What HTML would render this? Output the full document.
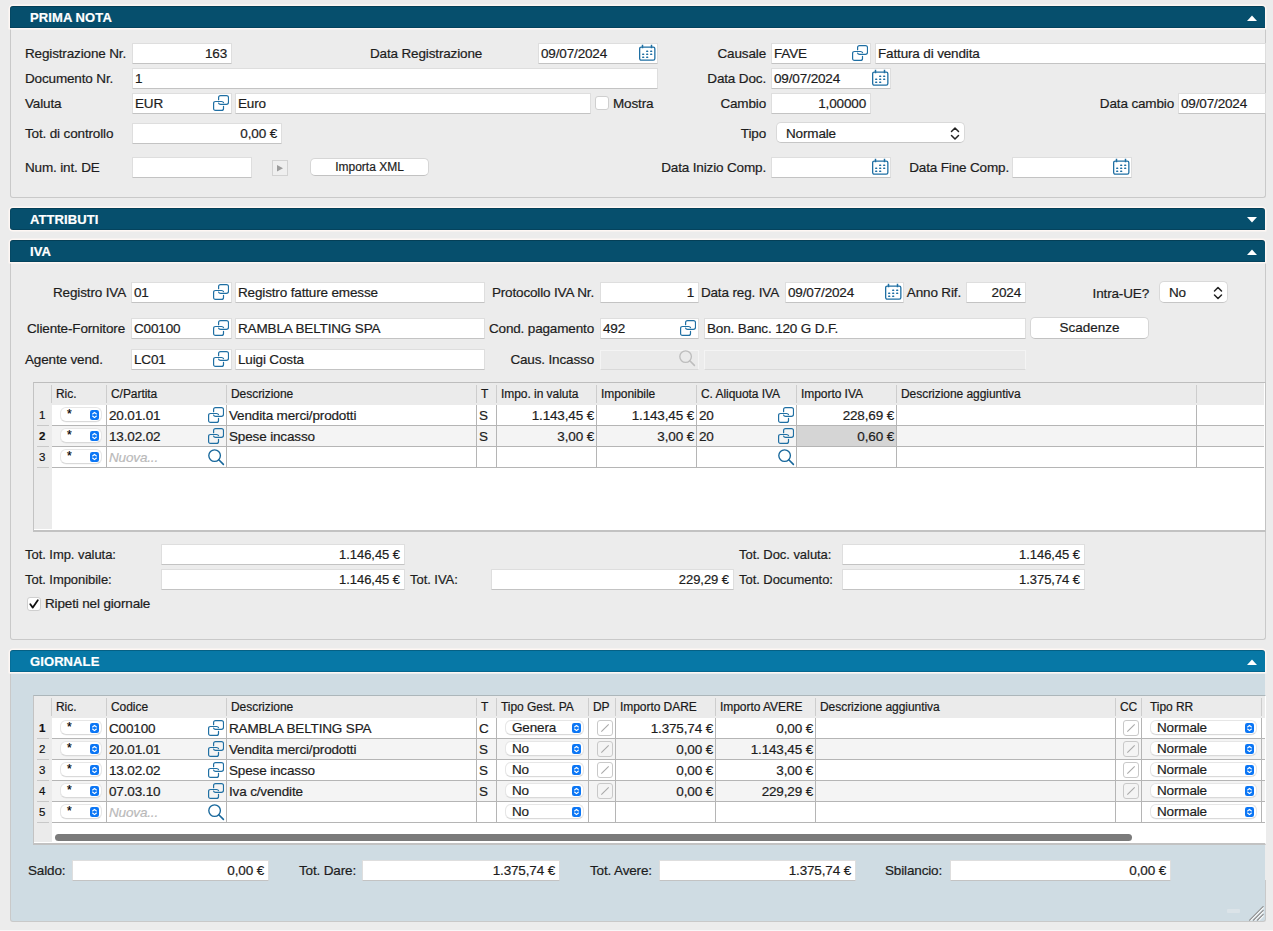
<!DOCTYPE html><html><head><meta charset="utf-8"><title>Prima Nota</title><style>

html,body{margin:0;padding:0}
body{width:1273px;height:931px;position:relative;overflow:hidden;background:#ececec;font-family:"Liberation Sans",sans-serif;}
.a{position:absolute;box-sizing:content-box}
.t{position:absolute;white-space:nowrap;font-family:"Liberation Sans",sans-serif;-webkit-text-stroke:0.2px currentColor}
.tf{border:1px solid #dedede;border-bottom-color:#c3c3c3;border-radius:1px}
.pop{background:#fff;border:1px solid #d9d9d9;border-bottom-color:#c6c6c6;border-radius:5px}
.btn{background:#fff;border:1px solid #d6d6d6;border-bottom-color:#c2c2c2;border-radius:5px;text-align:center;color:#1d1d1d;font-family:"Liberation Sans",sans-serif;white-space:nowrap}
.spop{background:#fff;border:1px solid #e6e6e6;border-bottom-color:#d9d9d9;border-radius:6px;box-shadow:0 0.5px 0.5px rgba(0,0,0,0.06)}
.cb{width:12px;height:12px;background:#fff;border:1px solid #cfcfcf;border-radius:3px}
.hdr{box-shadow:0 0 0 1.5px rgba(255,248,244,0.95), inset 0 1px 0 rgba(0,0,0,0.2), inset 0 -1px 0 rgba(0,0,0,0.14), inset 1px 0 0 rgba(0,0,0,0.08)}
.pnl{border:1px solid #c9c9c9;border-top:none;border-radius:0 0 3px 3px}

</style></head><body>
<div class="a pnl" style="left:10px;top:28px;width:1254px;height:169px;background:#ececec"></div>
<div class="a hdr" style="left:10px;top:6px;width:1255px;height:22px;background:#064f6d;border-radius:3px 3px 0 0"></div>
<div class="t" style="top:7px;height:22px;line-height:22px;font-size:13.01px;color:#fff;letter-spacing:0px;font-weight:bold;left:30px;letter-spacing:0.1px;">PRIMA NOTA</div>
<svg class="a" style="left:1247px;top:14.5px" width="10" height="7" viewBox="0 0 10 7"><polygon points="0,6 5,0.5 10,6" fill="#fff"/></svg>
<div class="t" style="top:44px;height:19px;line-height:19px;font-size:13.5px;color:#1d1d1d;letter-spacing:-0.15px;left:25px;">Registrazione Nr.</div>
<div class="a tf" style="left:132px;top:43px;width:98px;height:19px;background:#fff;border-color:#dedede;border-bottom-color:#c3c3c3"></div>
<div class="t" style="top:44px;height:20px;line-height:20px;font-size:13.5px;color:#1d1d1d;letter-spacing:-0.15px;right:1046px;text-align:right;">163</div>
<div class="t" style="top:44px;height:19px;line-height:19px;font-size:13.5px;color:#1d1d1d;letter-spacing:-0.15px;left:370px;">Data Registrazione</div>
<div class="a tf" style="left:538px;top:43px;width:118px;height:19px;background:#fff;border-color:#dedede;border-bottom-color:#c3c3c3"></div>
<div class="t" style="top:44px;height:20px;line-height:20px;font-size:13.5px;color:#1d1d1d;letter-spacing:-0.15px;left:541px;">09/07/2024</div>
<div class="a" style="left:639px;top:44px;line-height:0"><svg width="17" height="17" viewBox="0 0 17 17" fill="none" stroke="#1f6fa3" stroke-width="1.3"><rect x="0.65" y="3.1" width="15.2" height="13.1" rx="1.6"/><path d="M3.5,0.8 V4.3 M12.5,0.8 V4.3" stroke-width="1.5"/><g stroke="none" fill="#1f6fa3"><rect x="7.1" y="6.6" width="2.2" height="1.4" rx=".6"/><rect x="11.1" y="6.6" width="2.2" height="1.4" rx=".6"/><rect x="3.1" y="9.6" width="2.2" height="1.4" rx=".6"/><rect x="7.1" y="9.6" width="2.2" height="1.4" rx=".6"/><rect x="11.1" y="9.6" width="2.2" height="1.4" rx=".6"/><rect x="3.1" y="12.6" width="2.2" height="1.4" rx=".6"/><rect x="7.1" y="12.6" width="2.2" height="1.4" rx=".6"/></g></svg></div>
<div class="t" style="top:44px;height:19px;line-height:19px;font-size:13.5px;color:#1d1d1d;letter-spacing:-0.15px;right:507px;text-align:right;">Causale</div>
<div class="a tf" style="left:771px;top:43px;width:98px;height:19px;background:#fff;border-color:#dedede;border-bottom-color:#c3c3c3"></div>
<div class="t" style="top:44px;height:20px;line-height:20px;font-size:13.5px;color:#1d1d1d;letter-spacing:-0.15px;left:774px;">FAVE</div>
<div class="a" style="left:852px;top:45px;line-height:0"><svg width="16" height="16" viewBox="0 0 16 16" fill="none" stroke="#1f6fa3" stroke-width="1.2" stroke-linecap="round"><path d="M5.6,4.7 V2.6 Q5.6,0.6 7.6,0.6 H13.5 Q15.5,0.6 15.5,2.6 V7.3 Q15.5,9.3 13.5,9.3 H7.6 Q5.9,9.3 5.6,8.2"/><path d="M10.5,11.3 V13.4 Q10.5,15.4 8.5,15.4 H2.6 Q0.6,15.4 0.6,13.4 V8.5 Q0.6,6.5 2.6,6.5 H8.5 Q10.2,6.5 10.5,7.6"/></svg></div>
<div class="a tf" style="left:875px;top:43px;width:389px;height:19px;background:#fff;border-color:#dedede;border-bottom-color:#c3c3c3"></div>
<div class="t" style="top:44px;height:20px;line-height:20px;font-size:13.5px;color:#1d1d1d;letter-spacing:-0.15px;left:878px;">Fattura di vendita</div>
<div class="t" style="top:69px;height:19px;line-height:19px;font-size:13.5px;color:#1d1d1d;letter-spacing:-0.15px;left:25px;">Documento Nr.</div>
<div class="a tf" style="left:132px;top:68px;width:524px;height:19px;background:#fff;border-color:#dedede;border-bottom-color:#c3c3c3"></div>
<div class="t" style="top:69px;height:20px;line-height:20px;font-size:13.5px;color:#1d1d1d;letter-spacing:-0.15px;left:135px;">1</div>
<div class="t" style="top:69px;height:19px;line-height:19px;font-size:13.5px;color:#1d1d1d;letter-spacing:-0.15px;right:507px;text-align:right;">Data Doc.</div>
<div class="a tf" style="left:771px;top:68px;width:118px;height:19px;background:#fff;border-color:#dedede;border-bottom-color:#c3c3c3"></div>
<div class="t" style="top:69px;height:20px;line-height:20px;font-size:13.5px;color:#1d1d1d;letter-spacing:-0.15px;left:774px;">09/07/2024</div>
<div class="a" style="left:872px;top:69px;line-height:0"><svg width="17" height="17" viewBox="0 0 17 17" fill="none" stroke="#1f6fa3" stroke-width="1.3"><rect x="0.65" y="3.1" width="15.2" height="13.1" rx="1.6"/><path d="M3.5,0.8 V4.3 M12.5,0.8 V4.3" stroke-width="1.5"/><g stroke="none" fill="#1f6fa3"><rect x="7.1" y="6.6" width="2.2" height="1.4" rx=".6"/><rect x="11.1" y="6.6" width="2.2" height="1.4" rx=".6"/><rect x="3.1" y="9.6" width="2.2" height="1.4" rx=".6"/><rect x="7.1" y="9.6" width="2.2" height="1.4" rx=".6"/><rect x="11.1" y="9.6" width="2.2" height="1.4" rx=".6"/><rect x="3.1" y="12.6" width="2.2" height="1.4" rx=".6"/><rect x="7.1" y="12.6" width="2.2" height="1.4" rx=".6"/></g></svg></div>
<div class="t" style="top:94px;height:19px;line-height:19px;font-size:13.5px;color:#1d1d1d;letter-spacing:-0.15px;left:25px;">Valuta</div>
<div class="a tf" style="left:132px;top:93px;width:98px;height:19px;background:#fff;border-color:#dedede;border-bottom-color:#c3c3c3"></div>
<div class="t" style="top:94px;height:20px;line-height:20px;font-size:13.5px;color:#1d1d1d;letter-spacing:-0.15px;left:135px;">EUR</div>
<div class="a" style="left:213px;top:95px;line-height:0"><svg width="16" height="16" viewBox="0 0 16 16" fill="none" stroke="#1f6fa3" stroke-width="1.2" stroke-linecap="round"><path d="M5.6,4.7 V2.6 Q5.6,0.6 7.6,0.6 H13.5 Q15.5,0.6 15.5,2.6 V7.3 Q15.5,9.3 13.5,9.3 H7.6 Q5.9,9.3 5.6,8.2"/><path d="M10.5,11.3 V13.4 Q10.5,15.4 8.5,15.4 H2.6 Q0.6,15.4 0.6,13.4 V8.5 Q0.6,6.5 2.6,6.5 H8.5 Q10.2,6.5 10.5,7.6"/></svg></div>
<div class="a tf" style="left:235px;top:93px;width:354px;height:19px;background:#fff;border-color:#dedede;border-bottom-color:#c3c3c3"></div>
<div class="t" style="top:94px;height:20px;line-height:20px;font-size:13.5px;color:#1d1d1d;letter-spacing:-0.15px;left:238px;">Euro</div>
<div class="a cb" style="left:595px;top:96px"></div>
<div class="t" style="top:94px;height:19px;line-height:19px;font-size:13.5px;color:#1d1d1d;letter-spacing:-0.15px;left:613px;">Mostra</div>
<div class="t" style="top:94px;height:19px;line-height:19px;font-size:13.5px;color:#1d1d1d;letter-spacing:-0.15px;right:507px;text-align:right;">Cambio</div>
<div class="a tf" style="left:771px;top:93px;width:98px;height:19px;background:#fff;border-color:#dedede;border-bottom-color:#c3c3c3"></div>
<div class="t" style="top:94px;height:20px;line-height:20px;font-size:13.5px;color:#1d1d1d;letter-spacing:-0.15px;right:407px;text-align:right;">1,00000</div>
<div class="t" style="top:94px;height:19px;line-height:19px;font-size:13.5px;color:#1d1d1d;letter-spacing:-0.15px;right:99px;text-align:right;">Data cambio</div>
<div class="a tf" style="left:1178px;top:93px;width:86px;height:19px;background:#fff;border-color:#dedede;border-bottom-color:#c3c3c3"></div>
<div class="t" style="top:94px;height:20px;line-height:20px;font-size:13.5px;color:#1d1d1d;letter-spacing:-0.15px;left:1181px;">09/07/2024</div>
<div class="t" style="top:124px;height:19px;line-height:19px;font-size:13.5px;color:#1d1d1d;letter-spacing:-0.15px;left:25px;">Tot. di controllo</div>
<div class="a tf" style="left:132px;top:123px;width:148px;height:19px;background:#fff;border-color:#dedede;border-bottom-color:#c3c3c3"></div>
<div class="t" style="top:124px;height:20px;line-height:20px;font-size:13.5px;color:#1d1d1d;letter-spacing:-0.15px;right:996px;text-align:right;">0,00 €</div>
<div class="t" style="top:124px;height:20px;line-height:20px;font-size:13.5px;color:#1d1d1d;letter-spacing:-0.15px;right:507px;text-align:right;">Tipo</div>
<div class="a pop" style="left:776px;top:122px;width:187px;height:19px"></div>
<div class="t" style="top:123px;height:21px;line-height:21px;font-size:13.5px;color:#1d1d1d;letter-spacing:-0.15px;left:786px;">Normale</div>
<svg class="a" style="left:948px;top:123px" width="14" height="21" viewBox="0 0 14 21" fill="none" stroke="#222" stroke-width="1.5" stroke-linecap="round" stroke-linejoin="round"><path d="M3.5,8.5 L7,5.0 L10.5,8.5 M3.5,12.5 L7,16.0 L10.5,12.5"/></svg>
<div class="t" style="top:158px;height:19px;line-height:19px;font-size:13.5px;color:#1d1d1d;letter-spacing:-0.15px;left:25px;">Num. int. DE</div>
<div class="a tf" style="left:132px;top:157px;width:118px;height:19px;background:#fff;border-color:#dedede;border-bottom-color:#c3c3c3"></div>
<div class="a" style="left:272px;top:160px;width:14px;height:14px;background:#efefef;border:1px solid #d2d2d2"></div>
<svg class="a" style="left:277px;top:165px" width="7" height="7" viewBox="0 0 7 7"><polygon points="0,0 6,3.2 0,6.4" fill="#9c9c9c"/></svg>
<div class="a btn" style="left:310px;top:158px;width:117px;height:16px;line-height:16px;font-size:12px;-webkit-text-stroke:0.2px currentColor">Importa XML</div>
<div class="t" style="top:158px;height:19px;line-height:19px;font-size:13.5px;color:#1d1d1d;letter-spacing:-0.15px;right:507px;text-align:right;">Data Inizio Comp.</div>
<div class="a tf" style="left:771px;top:157px;width:118px;height:19px;background:#fff;border-color:#dedede;border-bottom-color:#c3c3c3"></div>
<div class="a" style="left:872px;top:158px;line-height:0"><svg width="17" height="17" viewBox="0 0 17 17" fill="none" stroke="#1f6fa3" stroke-width="1.3"><rect x="0.65" y="3.1" width="15.2" height="13.1" rx="1.6"/><path d="M3.5,0.8 V4.3 M12.5,0.8 V4.3" stroke-width="1.5"/><g stroke="none" fill="#1f6fa3"><rect x="7.1" y="6.6" width="2.2" height="1.4" rx=".6"/><rect x="11.1" y="6.6" width="2.2" height="1.4" rx=".6"/><rect x="3.1" y="9.6" width="2.2" height="1.4" rx=".6"/><rect x="7.1" y="9.6" width="2.2" height="1.4" rx=".6"/><rect x="11.1" y="9.6" width="2.2" height="1.4" rx=".6"/><rect x="3.1" y="12.6" width="2.2" height="1.4" rx=".6"/><rect x="7.1" y="12.6" width="2.2" height="1.4" rx=".6"/></g></svg></div>
<div class="t" style="top:158px;height:19px;line-height:19px;font-size:13.5px;color:#1d1d1d;letter-spacing:-0.15px;right:264px;text-align:right;">Data Fine Comp.</div>
<div class="a tf" style="left:1012px;top:157px;width:118px;height:19px;background:#fff;border-color:#dedede;border-bottom-color:#c3c3c3"></div>
<div class="a" style="left:1113px;top:158px;line-height:0"><svg width="17" height="17" viewBox="0 0 17 17" fill="none" stroke="#1f6fa3" stroke-width="1.3"><rect x="0.65" y="3.1" width="15.2" height="13.1" rx="1.6"/><path d="M3.5,0.8 V4.3 M12.5,0.8 V4.3" stroke-width="1.5"/><g stroke="none" fill="#1f6fa3"><rect x="7.1" y="6.6" width="2.2" height="1.4" rx=".6"/><rect x="11.1" y="6.6" width="2.2" height="1.4" rx=".6"/><rect x="3.1" y="9.6" width="2.2" height="1.4" rx=".6"/><rect x="7.1" y="9.6" width="2.2" height="1.4" rx=".6"/><rect x="11.1" y="9.6" width="2.2" height="1.4" rx=".6"/><rect x="3.1" y="12.6" width="2.2" height="1.4" rx=".6"/><rect x="7.1" y="12.6" width="2.2" height="1.4" rx=".6"/></g></svg></div>
<div class="a hdr" style="left:10px;top:208px;width:1255px;height:22px;background:#064f6d;border-radius:3px 3px 0 3px"></div>
<div class="t" style="top:209px;height:22px;line-height:22px;font-size:13.01px;color:#fff;letter-spacing:0px;font-weight:bold;left:30px;letter-spacing:0.1px;">ATTRIBUTI</div>
<svg class="a" style="left:1247px;top:216.5px" width="10" height="7" viewBox="0 0 10 7"><polygon points="0,0 10,0 5,5.5" fill="#fff"/></svg>
<div class="a pnl" style="left:10px;top:262px;width:1254px;height:377px;background:#ececec"></div>
<div class="a hdr" style="left:10px;top:240px;width:1255px;height:22px;background:#064f6d;border-radius:3px 3px 0 0"></div>
<div class="t" style="top:241px;height:22px;line-height:22px;font-size:13.01px;color:#fff;letter-spacing:0px;font-weight:bold;left:30px;letter-spacing:0.1px;">IVA</div>
<svg class="a" style="left:1247px;top:248.5px" width="10" height="7" viewBox="0 0 10 7"><polygon points="0,6 5,0.5 10,6" fill="#fff"/></svg>
<div class="t" style="top:283px;height:19px;line-height:19px;font-size:13.5px;color:#1d1d1d;letter-spacing:-0.15px;right:1147px;text-align:right;">Registro IVA</div>
<div class="a tf" style="left:131px;top:282px;width:99px;height:19px;background:#fff;border-color:#dedede;border-bottom-color:#c3c3c3"></div>
<div class="t" style="top:283px;height:20px;line-height:20px;font-size:13.5px;color:#1d1d1d;letter-spacing:-0.15px;left:134px;">01</div>
<div class="a" style="left:213px;top:284px;line-height:0"><svg width="16" height="16" viewBox="0 0 16 16" fill="none" stroke="#1f6fa3" stroke-width="1.2" stroke-linecap="round"><path d="M5.6,4.7 V2.6 Q5.6,0.6 7.6,0.6 H13.5 Q15.5,0.6 15.5,2.6 V7.3 Q15.5,9.3 13.5,9.3 H7.6 Q5.9,9.3 5.6,8.2"/><path d="M10.5,11.3 V13.4 Q10.5,15.4 8.5,15.4 H2.6 Q0.6,15.4 0.6,13.4 V8.5 Q0.6,6.5 2.6,6.5 H8.5 Q10.2,6.5 10.5,7.6"/></svg></div>
<div class="a tf" style="left:235px;top:282px;width:248px;height:19px;background:#fff;border-color:#dedede;border-bottom-color:#c3c3c3"></div>
<div class="t" style="top:283px;height:20px;line-height:20px;font-size:13.5px;color:#1d1d1d;letter-spacing:-0.15px;left:238px;">Registro fatture emesse</div>
<div class="t" style="top:283px;height:19px;line-height:19px;font-size:13.5px;color:#1d1d1d;letter-spacing:-0.15px;right:679px;text-align:right;">Protocollo IVA Nr.</div>
<div class="a tf" style="left:600px;top:282px;width:97px;height:19px;background:#fff;border-color:#dedede;border-bottom-color:#c3c3c3"></div>
<div class="t" style="top:283px;height:20px;line-height:20px;font-size:13.5px;color:#1d1d1d;letter-spacing:-0.15px;right:579px;text-align:right;">1</div>
<div class="t" style="top:283px;height:19px;line-height:19px;font-size:13.5px;color:#1d1d1d;letter-spacing:-0.15px;right:494px;text-align:right;">Data reg. IVA</div>
<div class="a tf" style="left:785px;top:282px;width:117px;height:19px;background:#fff;border-color:#dedede;border-bottom-color:#c3c3c3"></div>
<div class="t" style="top:283px;height:20px;line-height:20px;font-size:13.5px;color:#1d1d1d;letter-spacing:-0.15px;left:788px;">09/07/2024</div>
<div class="a" style="left:885px;top:283px;line-height:0"><svg width="17" height="17" viewBox="0 0 17 17" fill="none" stroke="#1f6fa3" stroke-width="1.3"><rect x="0.65" y="3.1" width="15.2" height="13.1" rx="1.6"/><path d="M3.5,0.8 V4.3 M12.5,0.8 V4.3" stroke-width="1.5"/><g stroke="none" fill="#1f6fa3"><rect x="7.1" y="6.6" width="2.2" height="1.4" rx=".6"/><rect x="11.1" y="6.6" width="2.2" height="1.4" rx=".6"/><rect x="3.1" y="9.6" width="2.2" height="1.4" rx=".6"/><rect x="7.1" y="9.6" width="2.2" height="1.4" rx=".6"/><rect x="11.1" y="9.6" width="2.2" height="1.4" rx=".6"/><rect x="3.1" y="12.6" width="2.2" height="1.4" rx=".6"/><rect x="7.1" y="12.6" width="2.2" height="1.4" rx=".6"/></g></svg></div>
<div class="t" style="top:283px;height:19px;line-height:19px;font-size:13.5px;color:#1d1d1d;letter-spacing:-0.15px;right:312px;text-align:right;">Anno Rif.</div>
<div class="a tf" style="left:966px;top:282px;width:58px;height:19px;background:#fff;border-color:#dedede;border-bottom-color:#c3c3c3"></div>
<div class="t" style="top:283px;height:20px;line-height:20px;font-size:13.5px;color:#1d1d1d;letter-spacing:-0.15px;right:252px;text-align:right;">2024</div>
<div class="t" style="top:283px;height:21px;line-height:21px;font-size:13.5px;color:#1d1d1d;letter-spacing:-0.15px;right:124px;text-align:right;">Intra-UE?</div>
<div class="a pop" style="left:1159px;top:281px;width:67px;height:20px"></div>
<div class="t" style="top:282px;height:22px;line-height:22px;font-size:13.5px;color:#1d1d1d;letter-spacing:-0.15px;left:1169px;">No</div>
<svg class="a" style="left:1211px;top:282px" width="14" height="22" viewBox="0 0 14 22" fill="none" stroke="#222" stroke-width="1.5" stroke-linecap="round" stroke-linejoin="round"><path d="M3.5,9.0 L7,5.5 L10.5,9.0 M3.5,13.0 L7,16.5 L10.5,13.0"/></svg>
<div class="t" style="top:319px;height:19px;line-height:19px;font-size:13.5px;color:#1d1d1d;letter-spacing:-0.15px;right:1148px;text-align:right;">Cliente-Fornitore</div>
<div class="a tf" style="left:131px;top:318px;width:99px;height:19px;background:#fff;border-color:#dedede;border-bottom-color:#c3c3c3"></div>
<div class="t" style="top:319px;height:20px;line-height:20px;font-size:13.5px;color:#1d1d1d;letter-spacing:-0.15px;left:134px;">C00100</div>
<div class="a" style="left:213px;top:320px;line-height:0"><svg width="16" height="16" viewBox="0 0 16 16" fill="none" stroke="#1f6fa3" stroke-width="1.2" stroke-linecap="round"><path d="M5.6,4.7 V2.6 Q5.6,0.6 7.6,0.6 H13.5 Q15.5,0.6 15.5,2.6 V7.3 Q15.5,9.3 13.5,9.3 H7.6 Q5.9,9.3 5.6,8.2"/><path d="M10.5,11.3 V13.4 Q10.5,15.4 8.5,15.4 H2.6 Q0.6,15.4 0.6,13.4 V8.5 Q0.6,6.5 2.6,6.5 H8.5 Q10.2,6.5 10.5,7.6"/></svg></div>
<div class="a tf" style="left:235px;top:318px;width:248px;height:19px;background:#fff;border-color:#dedede;border-bottom-color:#c3c3c3"></div>
<div class="t" style="top:319px;height:20px;line-height:20px;font-size:13.5px;color:#1d1d1d;letter-spacing:-0.15px;left:238px;">RAMBLA BELTING SPA</div>
<div class="t" style="top:319px;height:19px;line-height:19px;font-size:13.5px;color:#1d1d1d;letter-spacing:-0.15px;right:679px;text-align:right;">Cond. pagamento</div>
<div class="a tf" style="left:600px;top:318px;width:97px;height:19px;background:#fff;border-color:#dedede;border-bottom-color:#c3c3c3"></div>
<div class="t" style="top:319px;height:20px;line-height:20px;font-size:13.5px;color:#1d1d1d;letter-spacing:-0.15px;left:603px;">492</div>
<div class="a" style="left:680px;top:320px;line-height:0"><svg width="16" height="16" viewBox="0 0 16 16" fill="none" stroke="#1f6fa3" stroke-width="1.2" stroke-linecap="round"><path d="M5.6,4.7 V2.6 Q5.6,0.6 7.6,0.6 H13.5 Q15.5,0.6 15.5,2.6 V7.3 Q15.5,9.3 13.5,9.3 H7.6 Q5.9,9.3 5.6,8.2"/><path d="M10.5,11.3 V13.4 Q10.5,15.4 8.5,15.4 H2.6 Q0.6,15.4 0.6,13.4 V8.5 Q0.6,6.5 2.6,6.5 H8.5 Q10.2,6.5 10.5,7.6"/></svg></div>
<div class="a tf" style="left:704px;top:318px;width:320px;height:19px;background:#fff;border-color:#dedede;border-bottom-color:#c3c3c3"></div>
<div class="t" style="top:319px;height:20px;line-height:20px;font-size:13.5px;color:#1d1d1d;letter-spacing:-0.15px;left:707px;">Bon. Banc. 120 G D.F.</div>
<div class="a btn" style="left:1030px;top:317px;width:117px;height:20px;line-height:20px;font-size:13.5px;-webkit-text-stroke:0.2px currentColor">Scadenze</div>
<div class="t" style="top:350px;height:19px;line-height:19px;font-size:13.5px;color:#1d1d1d;letter-spacing:-0.15px;left:25px;">Agente vend.</div>
<div class="a tf" style="left:131px;top:349px;width:99px;height:19px;background:#fff;border-color:#dedede;border-bottom-color:#c3c3c3"></div>
<div class="t" style="top:350px;height:20px;line-height:20px;font-size:13.5px;color:#1d1d1d;letter-spacing:-0.15px;left:134px;">LC01</div>
<div class="a" style="left:213px;top:351px;line-height:0"><svg width="16" height="16" viewBox="0 0 16 16" fill="none" stroke="#1f6fa3" stroke-width="1.2" stroke-linecap="round"><path d="M5.6,4.7 V2.6 Q5.6,0.6 7.6,0.6 H13.5 Q15.5,0.6 15.5,2.6 V7.3 Q15.5,9.3 13.5,9.3 H7.6 Q5.9,9.3 5.6,8.2"/><path d="M10.5,11.3 V13.4 Q10.5,15.4 8.5,15.4 H2.6 Q0.6,15.4 0.6,13.4 V8.5 Q0.6,6.5 2.6,6.5 H8.5 Q10.2,6.5 10.5,7.6"/></svg></div>
<div class="a tf" style="left:235px;top:349px;width:248px;height:19px;background:#fff;border-color:#dedede;border-bottom-color:#c3c3c3"></div>
<div class="t" style="top:350px;height:20px;line-height:20px;font-size:13.5px;color:#1d1d1d;letter-spacing:-0.15px;left:238px;">Luigi Costa</div>
<div class="t" style="top:350px;height:19px;line-height:19px;font-size:13.5px;color:#1d1d1d;letter-spacing:-0.15px;right:679px;text-align:right;">Caus. Incasso</div>
<div class="a tf" style="left:600px;top:350px;width:97px;height:18px;background:#eaeaea;border-color:#f4f4f4;border-bottom-color:#d9d9d9"></div>
<div class="a" style="left:679px;top:350px;line-height:0"><svg width="17" height="17" viewBox="0 0 17 17" fill="none" stroke="#bdbdbd" stroke-width="1.35" stroke-linecap="round"><circle cx="6.6" cy="6.6" r="5.8"/><path d="M10.8,10.8 L15.4,15.4" stroke-width="1.6"/></svg></div>
<div class="a tf" style="left:704px;top:350px;width:320px;height:18px;background:#eaeaea;border-color:#f4f4f4;border-bottom-color:#d9d9d9"></div>
<div class="a" style="left:33px;top:382px;width:1231px;height:147px;background:#fff;border:1px solid #c3c3c3;border-top-color:#bdbdbd;border-bottom:2px solid #c2c2c2;"></div>
<div class="a" style="left:34px;top:383px;width:1230px;height:22px;background:#ebebeb"></div>
<div class="a" style="left:34px;top:383px;width:18px;height:146px;background:#ebebeb"></div>
<div class="a" style="left:51px;top:385px;width:1px;height:18px;background:#cdcdcd"></div>
<div class="a" style="left:106px;top:385px;width:1px;height:18px;background:#cdcdcd"></div>
<div class="a" style="left:226px;top:385px;width:1px;height:18px;background:#cdcdcd"></div>
<div class="a" style="left:476px;top:385px;width:1px;height:18px;background:#cdcdcd"></div>
<div class="a" style="left:496px;top:385px;width:1px;height:18px;background:#cdcdcd"></div>
<div class="a" style="left:596px;top:385px;width:1px;height:18px;background:#cdcdcd"></div>
<div class="a" style="left:696px;top:385px;width:1px;height:18px;background:#cdcdcd"></div>
<div class="a" style="left:796px;top:385px;width:1px;height:18px;background:#cdcdcd"></div>
<div class="a" style="left:896px;top:385px;width:1px;height:18px;background:#cdcdcd"></div>
<div class="a" style="left:1196px;top:385px;width:1px;height:18px;background:#cdcdcd"></div>
<div class="t" style="top:383px;height:22px;line-height:22px;font-size:12px;color:#1a1a1a;letter-spacing:-0.05px;left:56px;">Ric.</div>
<div class="t" style="top:383px;height:22px;line-height:22px;font-size:12px;color:#1a1a1a;letter-spacing:-0.05px;left:111px;">C/Partita</div>
<div class="t" style="top:383px;height:22px;line-height:22px;font-size:12px;color:#1a1a1a;letter-spacing:-0.05px;left:231px;">Descrizione</div>
<div class="t" style="top:383px;height:22px;line-height:22px;font-size:12px;color:#1a1a1a;letter-spacing:-0.05px;left:481px;">T</div>
<div class="t" style="top:383px;height:22px;line-height:22px;font-size:12px;color:#1a1a1a;letter-spacing:-0.05px;left:501px;">Impo. in valuta</div>
<div class="t" style="top:383px;height:22px;line-height:22px;font-size:12px;color:#1a1a1a;letter-spacing:-0.05px;left:601px;">Imponibile</div>
<div class="t" style="top:383px;height:22px;line-height:22px;font-size:12px;color:#1a1a1a;letter-spacing:-0.05px;left:701px;">C. Aliquota IVA</div>
<div class="t" style="top:383px;height:22px;line-height:22px;font-size:12px;color:#1a1a1a;letter-spacing:-0.05px;left:801px;">Importo IVA</div>
<div class="t" style="top:383px;height:22px;line-height:22px;font-size:12px;color:#1a1a1a;letter-spacing:-0.05px;left:901px;">Descrizione aggiuntiva</div>
<div class="a" style="left:52px;top:405px;width:1212px;height:20px;background:#fff"></div>
<div class="a" style="left:52px;top:425px;width:1212px;height:1px;background:#b5b5b5"></div>
<div class="a" style="left:37px;top:425px;width:12px;height:1px;background:#c8c8c8"></div>
<div class="t" style="top:405px;height:20px;line-height:20px;font-size:11.5px;color:#111;letter-spacing:0px;left:39px;">1</div>
<div class="a spop" style="left:60px;top:407px;width:40px;height:13px"></div>
<div class="t" style="left:67px;top:408px;font-size:12px;line-height:12px;color:#000">*</div>
<svg class="a" style="left:90px;top:410px" width="9" height="10" viewBox="0 0 9 10"><rect x="0" y="0" width="9" height="10" rx="2.2" fill="#0b76f5"/><path d="M2.6,4 L4.5,2.3 L6.4,4 M2.6,6 L4.5,7.7 L6.4,6" fill="none" stroke="#fff" stroke-width="1.1" stroke-linecap="round" stroke-linejoin="round"/></svg>
<div class="t" style="top:406px;height:20px;line-height:20px;font-size:13.5px;color:#1d1d1d;letter-spacing:-0.15px;left:109px;">20.01.01</div>
<div class="a" style="left:208px;top:407px;line-height:0"><svg width="16" height="16" viewBox="0 0 16 16" fill="none" stroke="#1f6fa3" stroke-width="1.2" stroke-linecap="round"><path d="M5.6,4.7 V2.6 Q5.6,0.6 7.6,0.6 H13.5 Q15.5,0.6 15.5,2.6 V7.3 Q15.5,9.3 13.5,9.3 H7.6 Q5.9,9.3 5.6,8.2"/><path d="M10.5,11.3 V13.4 Q10.5,15.4 8.5,15.4 H2.6 Q0.6,15.4 0.6,13.4 V8.5 Q0.6,6.5 2.6,6.5 H8.5 Q10.2,6.5 10.5,7.6"/></svg></div>
<div class="t" style="top:406px;height:20px;line-height:20px;font-size:13.5px;color:#1d1d1d;letter-spacing:-0.15px;left:229px;">Vendita merci/prodotti</div>
<div class="t" style="top:406px;height:20px;line-height:20px;font-size:13.5px;color:#1d1d1d;letter-spacing:-0.15px;left:479px;">S</div>
<div class="t" style="top:406px;height:20px;line-height:20px;font-size:13.5px;color:#1d1d1d;letter-spacing:-0.15px;right:679px;text-align:right;">1.143,45 €</div>
<div class="t" style="top:406px;height:20px;line-height:20px;font-size:13.5px;color:#1d1d1d;letter-spacing:-0.15px;right:579px;text-align:right;">1.143,45 €</div>
<div class="t" style="top:406px;height:20px;line-height:20px;font-size:13.5px;color:#1d1d1d;letter-spacing:-0.15px;left:699px;">20</div>
<div class="a" style="left:778px;top:407px;line-height:0"><svg width="16" height="16" viewBox="0 0 16 16" fill="none" stroke="#1f6fa3" stroke-width="1.2" stroke-linecap="round"><path d="M5.6,4.7 V2.6 Q5.6,0.6 7.6,0.6 H13.5 Q15.5,0.6 15.5,2.6 V7.3 Q15.5,9.3 13.5,9.3 H7.6 Q5.9,9.3 5.6,8.2"/><path d="M10.5,11.3 V13.4 Q10.5,15.4 8.5,15.4 H2.6 Q0.6,15.4 0.6,13.4 V8.5 Q0.6,6.5 2.6,6.5 H8.5 Q10.2,6.5 10.5,7.6"/></svg></div>
<div class="t" style="top:406px;height:20px;line-height:20px;font-size:13.5px;color:#1d1d1d;letter-spacing:-0.15px;right:379px;text-align:right;">228,69 €</div>
<div class="a" style="left:52px;top:426px;width:1212px;height:20px;background:#f4f4f4"></div>
<div class="a" style="left:797px;top:426px;width:99px;height:20px;background:#d5d5d5"></div>
<div class="a" style="left:52px;top:446px;width:1212px;height:1px;background:#b5b5b5"></div>
<div class="a" style="left:37px;top:446px;width:12px;height:1px;background:#c8c8c8"></div>
<div class="t" style="top:426px;height:20px;line-height:20px;font-size:11.5px;color:#111;letter-spacing:0px;font-weight:bold;left:39px;">2</div>
<div class="a spop" style="left:60px;top:428px;width:40px;height:13px"></div>
<div class="t" style="left:67px;top:429px;font-size:12px;line-height:12px;color:#000">*</div>
<svg class="a" style="left:90px;top:431px" width="9" height="10" viewBox="0 0 9 10"><rect x="0" y="0" width="9" height="10" rx="2.2" fill="#0b76f5"/><path d="M2.6,4 L4.5,2.3 L6.4,4 M2.6,6 L4.5,7.7 L6.4,6" fill="none" stroke="#fff" stroke-width="1.1" stroke-linecap="round" stroke-linejoin="round"/></svg>
<div class="t" style="top:427px;height:20px;line-height:20px;font-size:13.5px;color:#1d1d1d;letter-spacing:-0.15px;left:109px;">13.02.02</div>
<div class="a" style="left:208px;top:428px;line-height:0"><svg width="16" height="16" viewBox="0 0 16 16" fill="none" stroke="#1f6fa3" stroke-width="1.2" stroke-linecap="round"><path d="M5.6,4.7 V2.6 Q5.6,0.6 7.6,0.6 H13.5 Q15.5,0.6 15.5,2.6 V7.3 Q15.5,9.3 13.5,9.3 H7.6 Q5.9,9.3 5.6,8.2"/><path d="M10.5,11.3 V13.4 Q10.5,15.4 8.5,15.4 H2.6 Q0.6,15.4 0.6,13.4 V8.5 Q0.6,6.5 2.6,6.5 H8.5 Q10.2,6.5 10.5,7.6"/></svg></div>
<div class="t" style="top:427px;height:20px;line-height:20px;font-size:13.5px;color:#1d1d1d;letter-spacing:-0.15px;left:229px;">Spese incasso</div>
<div class="t" style="top:427px;height:20px;line-height:20px;font-size:13.5px;color:#1d1d1d;letter-spacing:-0.15px;left:479px;">S</div>
<div class="t" style="top:427px;height:20px;line-height:20px;font-size:13.5px;color:#1d1d1d;letter-spacing:-0.15px;right:679px;text-align:right;">3,00 €</div>
<div class="t" style="top:427px;height:20px;line-height:20px;font-size:13.5px;color:#1d1d1d;letter-spacing:-0.15px;right:579px;text-align:right;">3,00 €</div>
<div class="t" style="top:427px;height:20px;line-height:20px;font-size:13.5px;color:#1d1d1d;letter-spacing:-0.15px;left:699px;">20</div>
<div class="a" style="left:778px;top:428px;line-height:0"><svg width="16" height="16" viewBox="0 0 16 16" fill="none" stroke="#1f6fa3" stroke-width="1.2" stroke-linecap="round"><path d="M5.6,4.7 V2.6 Q5.6,0.6 7.6,0.6 H13.5 Q15.5,0.6 15.5,2.6 V7.3 Q15.5,9.3 13.5,9.3 H7.6 Q5.9,9.3 5.6,8.2"/><path d="M10.5,11.3 V13.4 Q10.5,15.4 8.5,15.4 H2.6 Q0.6,15.4 0.6,13.4 V8.5 Q0.6,6.5 2.6,6.5 H8.5 Q10.2,6.5 10.5,7.6"/></svg></div>
<div class="t" style="top:427px;height:20px;line-height:20px;font-size:13.5px;color:#1d1d1d;letter-spacing:-0.15px;right:379px;text-align:right;">0,60 €</div>
<div class="a" style="left:52px;top:447px;width:1212px;height:20px;background:#fff"></div>
<div class="a" style="left:52px;top:467px;width:1212px;height:1px;background:#b5b5b5"></div>
<div class="a" style="left:37px;top:467px;width:12px;height:1px;background:#c8c8c8"></div>
<div class="t" style="top:447px;height:20px;line-height:20px;font-size:11.5px;color:#111;letter-spacing:0px;left:39px;">3</div>
<div class="a spop" style="left:60px;top:449px;width:40px;height:13px"></div>
<div class="t" style="left:67px;top:450px;font-size:12px;line-height:12px;color:#000">*</div>
<svg class="a" style="left:90px;top:452px" width="9" height="10" viewBox="0 0 9 10"><rect x="0" y="0" width="9" height="10" rx="2.2" fill="#0b76f5"/><path d="M2.6,4 L4.5,2.3 L6.4,4 M2.6,6 L4.5,7.7 L6.4,6" fill="none" stroke="#fff" stroke-width="1.1" stroke-linecap="round" stroke-linejoin="round"/></svg>
<div class="t" style="top:448px;height:20px;line-height:20px;font-size:13.5px;color:#b9b9b9;letter-spacing:-0.15px;font-style:italic;left:109px;">Nuova...</div>
<div class="a" style="left:208px;top:449px;line-height:0"><svg width="17" height="17" viewBox="0 0 17 17" fill="none" stroke="#17679b" stroke-width="1.35" stroke-linecap="round"><circle cx="6.6" cy="6.6" r="5.8"/><path d="M10.8,10.8 L15.4,15.4" stroke-width="1.6"/></svg></div>
<div class="a" style="left:778px;top:449px;line-height:0"><svg width="17" height="17" viewBox="0 0 17 17" fill="none" stroke="#17679b" stroke-width="1.35" stroke-linecap="round"><circle cx="6.6" cy="6.6" r="5.8"/><path d="M10.8,10.8 L15.4,15.4" stroke-width="1.6"/></svg></div>
<div class="a" style="left:106px;top:405px;width:1px;height:62px;background:#b5b5b5"></div>
<div class="a" style="left:226px;top:405px;width:1px;height:62px;background:#b5b5b5"></div>
<div class="a" style="left:476px;top:405px;width:1px;height:62px;background:#b5b5b5"></div>
<div class="a" style="left:496px;top:405px;width:1px;height:62px;background:#b5b5b5"></div>
<div class="a" style="left:596px;top:405px;width:1px;height:62px;background:#b5b5b5"></div>
<div class="a" style="left:696px;top:405px;width:1px;height:62px;background:#b5b5b5"></div>
<div class="a" style="left:796px;top:405px;width:1px;height:62px;background:#b5b5b5"></div>
<div class="a" style="left:896px;top:405px;width:1px;height:62px;background:#b5b5b5"></div>
<div class="a" style="left:1196px;top:405px;width:1px;height:62px;background:#b5b5b5"></div>
<div class="t" style="top:545px;height:19px;line-height:19px;font-size:13px;color:#1d1d1d;letter-spacing:-0.05px;left:25px;">Tot. Imp. valuta:</div>
<div class="a tf" style="left:161px;top:544px;width:242px;height:19px;background:#fff;border-color:#dedede;border-bottom-color:#c3c3c3"></div>
<div class="t" style="top:545px;height:20px;line-height:20px;font-size:13px;color:#1d1d1d;letter-spacing:-0.05px;right:873px;text-align:right;">1.146,45 €</div>
<div class="t" style="top:570px;height:19px;line-height:19px;font-size:13px;color:#1d1d1d;letter-spacing:-0.05px;left:25px;">Tot. Imponibile:</div>
<div class="a tf" style="left:161px;top:569px;width:242px;height:19px;background:#fff;border-color:#dedede;border-bottom-color:#c3c3c3"></div>
<div class="t" style="top:570px;height:20px;line-height:20px;font-size:13px;color:#1d1d1d;letter-spacing:-0.05px;right:873px;text-align:right;">1.146,45 €</div>
<div class="t" style="top:570px;height:19px;line-height:19px;font-size:13px;color:#1d1d1d;letter-spacing:-0.05px;left:410px;">Tot. IVA:</div>
<div class="a tf" style="left:491px;top:569px;width:241px;height:19px;background:#fff;border-color:#dedede;border-bottom-color:#c3c3c3"></div>
<div class="t" style="top:570px;height:20px;line-height:20px;font-size:13px;color:#1d1d1d;letter-spacing:-0.05px;right:544px;text-align:right;">229,29 €</div>
<div class="t" style="top:545px;height:19px;line-height:19px;font-size:13px;color:#1d1d1d;letter-spacing:-0.05px;left:739px;">Tot. Doc. valuta:</div>
<div class="a tf" style="left:842px;top:544px;width:241px;height:19px;background:#fff;border-color:#dedede;border-bottom-color:#c3c3c3"></div>
<div class="t" style="top:545px;height:20px;line-height:20px;font-size:13px;color:#1d1d1d;letter-spacing:-0.05px;right:193px;text-align:right;">1.146,45 €</div>
<div class="t" style="top:570px;height:19px;line-height:19px;font-size:13px;color:#1d1d1d;letter-spacing:-0.05px;left:739px;">Tot. Documento:</div>
<div class="a tf" style="left:842px;top:569px;width:241px;height:19px;background:#fff;border-color:#dedede;border-bottom-color:#c3c3c3"></div>
<div class="t" style="top:570px;height:20px;line-height:20px;font-size:13px;color:#1d1d1d;letter-spacing:-0.05px;right:193px;text-align:right;">1.375,74 €</div>
<div class="a cb" style="left:27px;top:597px"></div>
<svg class="a" style="left:27px;top:597px" width="14" height="14" viewBox="0 0 14 14" fill="none" stroke="#111" stroke-width="1.8" stroke-linecap="round" stroke-linejoin="round"><path d="M3.3,7.3 L5.8,10.6 L10.8,3.2"/></svg>
<div class="t" style="top:594px;height:20px;line-height:20px;font-size:13.5px;color:#1d1d1d;letter-spacing:-0.15px;left:45px;">Ripeti nel giornale</div>
<div class="a pnl" style="left:10px;top:672px;width:1254px;height:249px;background:#cfdce3"></div>
<div class="a" style="left:1265px;top:672px;width:1px;height:208px;background:#ececec"></div>
<div class="a" style="left:10px;top:672px;width:1255px;height:2px;background:#dbe4e8"></div>
<div class="a hdr" style="left:10px;top:650px;width:1255px;height:22px;background:#0778a6;border-radius:3px 3px 0 0"></div>
<div class="t" style="top:651px;height:22px;line-height:22px;font-size:13.01px;color:#fff;letter-spacing:0px;font-weight:bold;left:30px;letter-spacing:0.1px;">GIORNALE</div>
<svg class="a" style="left:1247px;top:658.5px" width="10" height="7" viewBox="0 0 10 7"><polygon points="0,6 5,0.5 10,6" fill="#fff"/></svg>
<div class="a" style="left:33px;top:695px;width:1231px;height:147px;background:#fff;border:1px solid #c3c3c3;border-top-color:#acb6ba;border-bottom:2px solid #c2c2c2;border-right:1px solid transparent;"></div>
<div class="a" style="left:34px;top:696px;width:1231px;height:22px;background:#ebebeb"></div>
<div class="a" style="left:34px;top:696px;width:18px;height:146px;background:#ebebeb"></div>
<div class="a" style="left:51px;top:698px;width:1px;height:18px;background:#cdcdcd"></div>
<div class="a" style="left:106px;top:698px;width:1px;height:18px;background:#cdcdcd"></div>
<div class="a" style="left:226px;top:698px;width:1px;height:18px;background:#cdcdcd"></div>
<div class="a" style="left:476px;top:698px;width:1px;height:18px;background:#cdcdcd"></div>
<div class="a" style="left:496px;top:698px;width:1px;height:18px;background:#cdcdcd"></div>
<div class="a" style="left:588px;top:698px;width:1px;height:18px;background:#cdcdcd"></div>
<div class="a" style="left:615px;top:698px;width:1px;height:18px;background:#cdcdcd"></div>
<div class="a" style="left:715px;top:698px;width:1px;height:18px;background:#cdcdcd"></div>
<div class="a" style="left:815px;top:698px;width:1px;height:18px;background:#cdcdcd"></div>
<div class="a" style="left:1115px;top:698px;width:1px;height:18px;background:#cdcdcd"></div>
<div class="a" style="left:1141px;top:698px;width:1px;height:18px;background:#cdcdcd"></div>
<div class="a" style="left:1261px;top:698px;width:1px;height:18px;background:#cdcdcd"></div>
<div class="t" style="top:696px;height:22px;line-height:22px;font-size:12px;color:#1a1a1a;letter-spacing:-0.05px;left:56px;">Ric.</div>
<div class="t" style="top:696px;height:22px;line-height:22px;font-size:12px;color:#1a1a1a;letter-spacing:-0.05px;left:111px;">Codice</div>
<div class="t" style="top:696px;height:22px;line-height:22px;font-size:12px;color:#1a1a1a;letter-spacing:-0.05px;left:231px;">Descrizione</div>
<div class="t" style="top:696px;height:22px;line-height:22px;font-size:12px;color:#1a1a1a;letter-spacing:-0.05px;left:481px;">T</div>
<div class="t" style="top:696px;height:22px;line-height:22px;font-size:12px;color:#1a1a1a;letter-spacing:-0.05px;left:501px;">Tipo Gest. PA</div>
<div class="t" style="top:696px;height:22px;line-height:22px;font-size:12px;color:#1a1a1a;letter-spacing:-0.05px;left:593px;">DP</div>
<div class="t" style="top:696px;height:22px;line-height:22px;font-size:12px;color:#1a1a1a;letter-spacing:-0.05px;left:620px;">Importo DARE</div>
<div class="t" style="top:696px;height:22px;line-height:22px;font-size:12px;color:#1a1a1a;letter-spacing:-0.05px;left:720px;">Importo AVERE</div>
<div class="t" style="top:696px;height:22px;line-height:22px;font-size:12px;color:#1a1a1a;letter-spacing:-0.05px;left:820px;">Descrizione aggiuntiva</div>
<div class="t" style="top:696px;height:22px;line-height:22px;font-size:12px;color:#1a1a1a;letter-spacing:-0.05px;left:1120px;">CC</div>
<div class="t" style="top:696px;height:22px;line-height:22px;font-size:12px;color:#1a1a1a;letter-spacing:-0.05px;left:1150px;">Tipo RR</div>
<div class="a" style="left:52px;top:718px;width:1213px;height:20px;background:#fff"></div>
<div class="a" style="left:52px;top:738px;width:1213px;height:1px;background:#b5b5b5"></div>
<div class="a" style="left:37px;top:738px;width:12px;height:1px;background:#c8c8c8"></div>
<div class="t" style="top:718px;height:20px;line-height:20px;font-size:11.5px;color:#111;letter-spacing:0px;font-weight:bold;left:39px;">1</div>
<div class="a spop" style="left:60px;top:720px;width:40px;height:13px"></div>
<div class="t" style="left:67px;top:721px;font-size:12px;line-height:12px;color:#000">*</div>
<svg class="a" style="left:90px;top:723px" width="9" height="10" viewBox="0 0 9 10"><rect x="0" y="0" width="9" height="10" rx="2.2" fill="#0b76f5"/><path d="M2.6,4 L4.5,2.3 L6.4,4 M2.6,6 L4.5,7.7 L6.4,6" fill="none" stroke="#fff" stroke-width="1.1" stroke-linecap="round" stroke-linejoin="round"/></svg>
<div class="t" style="top:719px;height:20px;line-height:20px;font-size:13.5px;color:#1d1d1d;letter-spacing:-0.15px;left:109px;">C00100</div>
<div class="a" style="left:208px;top:720px;line-height:0"><svg width="16" height="16" viewBox="0 0 16 16" fill="none" stroke="#1f6fa3" stroke-width="1.2" stroke-linecap="round"><path d="M5.6,4.7 V2.6 Q5.6,0.6 7.6,0.6 H13.5 Q15.5,0.6 15.5,2.6 V7.3 Q15.5,9.3 13.5,9.3 H7.6 Q5.9,9.3 5.6,8.2"/><path d="M10.5,11.3 V13.4 Q10.5,15.4 8.5,15.4 H2.6 Q0.6,15.4 0.6,13.4 V8.5 Q0.6,6.5 2.6,6.5 H8.5 Q10.2,6.5 10.5,7.6"/></svg></div>
<div class="t" style="top:719px;height:20px;line-height:20px;font-size:13.5px;color:#1d1d1d;letter-spacing:-0.15px;left:229px;">RAMBLA BELTING SPA</div>
<div class="t" style="top:719px;height:20px;line-height:20px;font-size:13.5px;color:#1d1d1d;letter-spacing:-0.15px;left:479px;">C</div>
<div class="a spop" style="left:505px;top:720px;width:77px;height:13px"></div>
<div class="t" style="top:718px;height:19px;line-height:19px;font-size:13.5px;color:#1d1d1d;letter-spacing:-0.15px;left:512px;">Genera</div>
<svg class="a" style="left:572px;top:723px" width="9" height="10" viewBox="0 0 9 10"><rect x="0" y="0" width="9" height="10" rx="2.2" fill="#0b76f5"/><path d="M2.6,4 L4.5,2.3 L6.4,4 M2.6,6 L4.5,7.7 L6.4,6" fill="none" stroke="#fff" stroke-width="1.1" stroke-linecap="round" stroke-linejoin="round"/></svg>
<div class="t" style="top:719px;height:20px;line-height:20px;font-size:13.5px;color:#1d1d1d;letter-spacing:-0.15px;right:560px;text-align:right;">1.375,74 €</div>
<div class="t" style="top:719px;height:20px;line-height:20px;font-size:13.5px;color:#1d1d1d;letter-spacing:-0.15px;right:460px;text-align:right;">0,00 €</div>
<div class="a spop" style="left:1150px;top:720px;width:105px;height:13px"></div>
<div class="t" style="top:718px;height:19px;line-height:19px;font-size:13.5px;color:#1d1d1d;letter-spacing:-0.15px;left:1157px;">Normale</div>
<svg class="a" style="left:1245px;top:723px" width="9" height="10" viewBox="0 0 9 10"><rect x="0" y="0" width="9" height="10" rx="2.2" fill="#0b76f5"/><path d="M2.6,4 L4.5,2.3 L6.4,4 M2.6,6 L4.5,7.7 L6.4,6" fill="none" stroke="#fff" stroke-width="1.1" stroke-linecap="round" stroke-linejoin="round"/></svg>
<div class="a" style="left:597px;top:720px;width:14px;height:14px;border:1px solid #c9c9c9;border-radius:3px;background:transparent"></div>
<svg class="a" style="left:597px;top:720px" width="16" height="16" viewBox="0 0 16 16"><path d="M4.3,11.7 L11.7,4.3" stroke="#a9a9a9" stroke-width="1.1"/></svg>
<div class="a" style="left:1123px;top:720px;width:14px;height:14px;border:1px solid #c9c9c9;border-radius:3px;background:transparent"></div>
<svg class="a" style="left:1123px;top:720px" width="16" height="16" viewBox="0 0 16 16"><path d="M4.3,11.7 L11.7,4.3" stroke="#a9a9a9" stroke-width="1.1"/></svg>
<div class="a" style="left:52px;top:739px;width:1213px;height:20px;background:#f4f4f4"></div>
<div class="a" style="left:52px;top:759px;width:1213px;height:1px;background:#b5b5b5"></div>
<div class="a" style="left:37px;top:759px;width:12px;height:1px;background:#c8c8c8"></div>
<div class="t" style="top:739px;height:20px;line-height:20px;font-size:11.5px;color:#111;letter-spacing:0px;left:39px;">2</div>
<div class="a spop" style="left:60px;top:741px;width:40px;height:13px"></div>
<div class="t" style="left:67px;top:742px;font-size:12px;line-height:12px;color:#000">*</div>
<svg class="a" style="left:90px;top:744px" width="9" height="10" viewBox="0 0 9 10"><rect x="0" y="0" width="9" height="10" rx="2.2" fill="#0b76f5"/><path d="M2.6,4 L4.5,2.3 L6.4,4 M2.6,6 L4.5,7.7 L6.4,6" fill="none" stroke="#fff" stroke-width="1.1" stroke-linecap="round" stroke-linejoin="round"/></svg>
<div class="t" style="top:740px;height:20px;line-height:20px;font-size:13.5px;color:#1d1d1d;letter-spacing:-0.15px;left:109px;">20.01.01</div>
<div class="a" style="left:208px;top:741px;line-height:0"><svg width="16" height="16" viewBox="0 0 16 16" fill="none" stroke="#1f6fa3" stroke-width="1.2" stroke-linecap="round"><path d="M5.6,4.7 V2.6 Q5.6,0.6 7.6,0.6 H13.5 Q15.5,0.6 15.5,2.6 V7.3 Q15.5,9.3 13.5,9.3 H7.6 Q5.9,9.3 5.6,8.2"/><path d="M10.5,11.3 V13.4 Q10.5,15.4 8.5,15.4 H2.6 Q0.6,15.4 0.6,13.4 V8.5 Q0.6,6.5 2.6,6.5 H8.5 Q10.2,6.5 10.5,7.6"/></svg></div>
<div class="t" style="top:740px;height:20px;line-height:20px;font-size:13.5px;color:#1d1d1d;letter-spacing:-0.15px;left:229px;">Vendita merci/prodotti</div>
<div class="t" style="top:740px;height:20px;line-height:20px;font-size:13.5px;color:#1d1d1d;letter-spacing:-0.15px;left:479px;">S</div>
<div class="a spop" style="left:505px;top:741px;width:77px;height:13px"></div>
<div class="t" style="top:739px;height:19px;line-height:19px;font-size:13.5px;color:#1d1d1d;letter-spacing:-0.15px;left:512px;">No</div>
<svg class="a" style="left:572px;top:744px" width="9" height="10" viewBox="0 0 9 10"><rect x="0" y="0" width="9" height="10" rx="2.2" fill="#0b76f5"/><path d="M2.6,4 L4.5,2.3 L6.4,4 M2.6,6 L4.5,7.7 L6.4,6" fill="none" stroke="#fff" stroke-width="1.1" stroke-linecap="round" stroke-linejoin="round"/></svg>
<div class="t" style="top:740px;height:20px;line-height:20px;font-size:13.5px;color:#1d1d1d;letter-spacing:-0.15px;right:560px;text-align:right;">0,00 €</div>
<div class="t" style="top:740px;height:20px;line-height:20px;font-size:13.5px;color:#1d1d1d;letter-spacing:-0.15px;right:460px;text-align:right;">1.143,45 €</div>
<div class="a spop" style="left:1150px;top:741px;width:105px;height:13px"></div>
<div class="t" style="top:739px;height:19px;line-height:19px;font-size:13.5px;color:#1d1d1d;letter-spacing:-0.15px;left:1157px;">Normale</div>
<svg class="a" style="left:1245px;top:744px" width="9" height="10" viewBox="0 0 9 10"><rect x="0" y="0" width="9" height="10" rx="2.2" fill="#0b76f5"/><path d="M2.6,4 L4.5,2.3 L6.4,4 M2.6,6 L4.5,7.7 L6.4,6" fill="none" stroke="#fff" stroke-width="1.1" stroke-linecap="round" stroke-linejoin="round"/></svg>
<div class="a" style="left:597px;top:741px;width:14px;height:14px;border:1px solid #c9c9c9;border-radius:3px;background:transparent"></div>
<svg class="a" style="left:597px;top:741px" width="16" height="16" viewBox="0 0 16 16"><path d="M4.3,11.7 L11.7,4.3" stroke="#a9a9a9" stroke-width="1.1"/></svg>
<div class="a" style="left:1123px;top:741px;width:14px;height:14px;border:1px solid #c9c9c9;border-radius:3px;background:transparent"></div>
<svg class="a" style="left:1123px;top:741px" width="16" height="16" viewBox="0 0 16 16"><path d="M4.3,11.7 L11.7,4.3" stroke="#a9a9a9" stroke-width="1.1"/></svg>
<div class="a" style="left:52px;top:760px;width:1213px;height:20px;background:#fff"></div>
<div class="a" style="left:52px;top:780px;width:1213px;height:1px;background:#b5b5b5"></div>
<div class="a" style="left:37px;top:780px;width:12px;height:1px;background:#c8c8c8"></div>
<div class="t" style="top:760px;height:20px;line-height:20px;font-size:11.5px;color:#111;letter-spacing:0px;left:39px;">3</div>
<div class="a spop" style="left:60px;top:762px;width:40px;height:13px"></div>
<div class="t" style="left:67px;top:763px;font-size:12px;line-height:12px;color:#000">*</div>
<svg class="a" style="left:90px;top:765px" width="9" height="10" viewBox="0 0 9 10"><rect x="0" y="0" width="9" height="10" rx="2.2" fill="#0b76f5"/><path d="M2.6,4 L4.5,2.3 L6.4,4 M2.6,6 L4.5,7.7 L6.4,6" fill="none" stroke="#fff" stroke-width="1.1" stroke-linecap="round" stroke-linejoin="round"/></svg>
<div class="t" style="top:761px;height:20px;line-height:20px;font-size:13.5px;color:#1d1d1d;letter-spacing:-0.15px;left:109px;">13.02.02</div>
<div class="a" style="left:208px;top:762px;line-height:0"><svg width="16" height="16" viewBox="0 0 16 16" fill="none" stroke="#1f6fa3" stroke-width="1.2" stroke-linecap="round"><path d="M5.6,4.7 V2.6 Q5.6,0.6 7.6,0.6 H13.5 Q15.5,0.6 15.5,2.6 V7.3 Q15.5,9.3 13.5,9.3 H7.6 Q5.9,9.3 5.6,8.2"/><path d="M10.5,11.3 V13.4 Q10.5,15.4 8.5,15.4 H2.6 Q0.6,15.4 0.6,13.4 V8.5 Q0.6,6.5 2.6,6.5 H8.5 Q10.2,6.5 10.5,7.6"/></svg></div>
<div class="t" style="top:761px;height:20px;line-height:20px;font-size:13.5px;color:#1d1d1d;letter-spacing:-0.15px;left:229px;">Spese incasso</div>
<div class="t" style="top:761px;height:20px;line-height:20px;font-size:13.5px;color:#1d1d1d;letter-spacing:-0.15px;left:479px;">S</div>
<div class="a spop" style="left:505px;top:762px;width:77px;height:13px"></div>
<div class="t" style="top:760px;height:19px;line-height:19px;font-size:13.5px;color:#1d1d1d;letter-spacing:-0.15px;left:512px;">No</div>
<svg class="a" style="left:572px;top:765px" width="9" height="10" viewBox="0 0 9 10"><rect x="0" y="0" width="9" height="10" rx="2.2" fill="#0b76f5"/><path d="M2.6,4 L4.5,2.3 L6.4,4 M2.6,6 L4.5,7.7 L6.4,6" fill="none" stroke="#fff" stroke-width="1.1" stroke-linecap="round" stroke-linejoin="round"/></svg>
<div class="t" style="top:761px;height:20px;line-height:20px;font-size:13.5px;color:#1d1d1d;letter-spacing:-0.15px;right:560px;text-align:right;">0,00 €</div>
<div class="t" style="top:761px;height:20px;line-height:20px;font-size:13.5px;color:#1d1d1d;letter-spacing:-0.15px;right:460px;text-align:right;">3,00 €</div>
<div class="a spop" style="left:1150px;top:762px;width:105px;height:13px"></div>
<div class="t" style="top:760px;height:19px;line-height:19px;font-size:13.5px;color:#1d1d1d;letter-spacing:-0.15px;left:1157px;">Normale</div>
<svg class="a" style="left:1245px;top:765px" width="9" height="10" viewBox="0 0 9 10"><rect x="0" y="0" width="9" height="10" rx="2.2" fill="#0b76f5"/><path d="M2.6,4 L4.5,2.3 L6.4,4 M2.6,6 L4.5,7.7 L6.4,6" fill="none" stroke="#fff" stroke-width="1.1" stroke-linecap="round" stroke-linejoin="round"/></svg>
<div class="a" style="left:597px;top:762px;width:14px;height:14px;border:1px solid #c9c9c9;border-radius:3px;background:transparent"></div>
<svg class="a" style="left:597px;top:762px" width="16" height="16" viewBox="0 0 16 16"><path d="M4.3,11.7 L11.7,4.3" stroke="#a9a9a9" stroke-width="1.1"/></svg>
<div class="a" style="left:1123px;top:762px;width:14px;height:14px;border:1px solid #c9c9c9;border-radius:3px;background:transparent"></div>
<svg class="a" style="left:1123px;top:762px" width="16" height="16" viewBox="0 0 16 16"><path d="M4.3,11.7 L11.7,4.3" stroke="#a9a9a9" stroke-width="1.1"/></svg>
<div class="a" style="left:52px;top:781px;width:1213px;height:20px;background:#f4f4f4"></div>
<div class="a" style="left:52px;top:801px;width:1213px;height:1px;background:#b5b5b5"></div>
<div class="a" style="left:37px;top:801px;width:12px;height:1px;background:#c8c8c8"></div>
<div class="t" style="top:781px;height:20px;line-height:20px;font-size:11.5px;color:#111;letter-spacing:0px;left:39px;">4</div>
<div class="a spop" style="left:60px;top:783px;width:40px;height:13px"></div>
<div class="t" style="left:67px;top:784px;font-size:12px;line-height:12px;color:#000">*</div>
<svg class="a" style="left:90px;top:786px" width="9" height="10" viewBox="0 0 9 10"><rect x="0" y="0" width="9" height="10" rx="2.2" fill="#0b76f5"/><path d="M2.6,4 L4.5,2.3 L6.4,4 M2.6,6 L4.5,7.7 L6.4,6" fill="none" stroke="#fff" stroke-width="1.1" stroke-linecap="round" stroke-linejoin="round"/></svg>
<div class="t" style="top:782px;height:20px;line-height:20px;font-size:13.5px;color:#1d1d1d;letter-spacing:-0.15px;left:109px;">07.03.10</div>
<div class="a" style="left:208px;top:783px;line-height:0"><svg width="16" height="16" viewBox="0 0 16 16" fill="none" stroke="#1f6fa3" stroke-width="1.2" stroke-linecap="round"><path d="M5.6,4.7 V2.6 Q5.6,0.6 7.6,0.6 H13.5 Q15.5,0.6 15.5,2.6 V7.3 Q15.5,9.3 13.5,9.3 H7.6 Q5.9,9.3 5.6,8.2"/><path d="M10.5,11.3 V13.4 Q10.5,15.4 8.5,15.4 H2.6 Q0.6,15.4 0.6,13.4 V8.5 Q0.6,6.5 2.6,6.5 H8.5 Q10.2,6.5 10.5,7.6"/></svg></div>
<div class="t" style="top:782px;height:20px;line-height:20px;font-size:13.5px;color:#1d1d1d;letter-spacing:-0.15px;left:229px;">Iva c/vendite</div>
<div class="t" style="top:782px;height:20px;line-height:20px;font-size:13.5px;color:#1d1d1d;letter-spacing:-0.15px;left:479px;">S</div>
<div class="a spop" style="left:505px;top:783px;width:77px;height:13px"></div>
<div class="t" style="top:781px;height:19px;line-height:19px;font-size:13.5px;color:#1d1d1d;letter-spacing:-0.15px;left:512px;">No</div>
<svg class="a" style="left:572px;top:786px" width="9" height="10" viewBox="0 0 9 10"><rect x="0" y="0" width="9" height="10" rx="2.2" fill="#0b76f5"/><path d="M2.6,4 L4.5,2.3 L6.4,4 M2.6,6 L4.5,7.7 L6.4,6" fill="none" stroke="#fff" stroke-width="1.1" stroke-linecap="round" stroke-linejoin="round"/></svg>
<div class="t" style="top:782px;height:20px;line-height:20px;font-size:13.5px;color:#1d1d1d;letter-spacing:-0.15px;right:560px;text-align:right;">0,00 €</div>
<div class="t" style="top:782px;height:20px;line-height:20px;font-size:13.5px;color:#1d1d1d;letter-spacing:-0.15px;right:460px;text-align:right;">229,29 €</div>
<div class="a spop" style="left:1150px;top:783px;width:105px;height:13px"></div>
<div class="t" style="top:781px;height:19px;line-height:19px;font-size:13.5px;color:#1d1d1d;letter-spacing:-0.15px;left:1157px;">Normale</div>
<svg class="a" style="left:1245px;top:786px" width="9" height="10" viewBox="0 0 9 10"><rect x="0" y="0" width="9" height="10" rx="2.2" fill="#0b76f5"/><path d="M2.6,4 L4.5,2.3 L6.4,4 M2.6,6 L4.5,7.7 L6.4,6" fill="none" stroke="#fff" stroke-width="1.1" stroke-linecap="round" stroke-linejoin="round"/></svg>
<div class="a" style="left:597px;top:783px;width:14px;height:14px;border:1px solid #c9c9c9;border-radius:3px;background:transparent"></div>
<svg class="a" style="left:597px;top:783px" width="16" height="16" viewBox="0 0 16 16"><path d="M4.3,11.7 L11.7,4.3" stroke="#a9a9a9" stroke-width="1.1"/></svg>
<div class="a" style="left:1123px;top:783px;width:14px;height:14px;border:1px solid #c9c9c9;border-radius:3px;background:transparent"></div>
<svg class="a" style="left:1123px;top:783px" width="16" height="16" viewBox="0 0 16 16"><path d="M4.3,11.7 L11.7,4.3" stroke="#a9a9a9" stroke-width="1.1"/></svg>
<div class="a" style="left:52px;top:802px;width:1213px;height:20px;background:#fff"></div>
<div class="a" style="left:52px;top:822px;width:1213px;height:1px;background:#b5b5b5"></div>
<div class="a" style="left:37px;top:822px;width:12px;height:1px;background:#c8c8c8"></div>
<div class="t" style="top:802px;height:20px;line-height:20px;font-size:11.5px;color:#111;letter-spacing:0px;left:39px;">5</div>
<div class="a spop" style="left:60px;top:804px;width:40px;height:13px"></div>
<div class="t" style="left:67px;top:805px;font-size:12px;line-height:12px;color:#000">*</div>
<svg class="a" style="left:90px;top:807px" width="9" height="10" viewBox="0 0 9 10"><rect x="0" y="0" width="9" height="10" rx="2.2" fill="#0b76f5"/><path d="M2.6,4 L4.5,2.3 L6.4,4 M2.6,6 L4.5,7.7 L6.4,6" fill="none" stroke="#fff" stroke-width="1.1" stroke-linecap="round" stroke-linejoin="round"/></svg>
<div class="t" style="top:803px;height:20px;line-height:20px;font-size:13.5px;color:#b9b9b9;letter-spacing:-0.15px;font-style:italic;left:109px;">Nuova...</div>
<div class="a" style="left:208px;top:804px;line-height:0"><svg width="17" height="17" viewBox="0 0 17 17" fill="none" stroke="#17679b" stroke-width="1.35" stroke-linecap="round"><circle cx="6.6" cy="6.6" r="5.8"/><path d="M10.8,10.8 L15.4,15.4" stroke-width="1.6"/></svg></div>
<div class="a spop" style="left:505px;top:804px;width:77px;height:13px"></div>
<div class="t" style="top:802px;height:19px;line-height:19px;font-size:13.5px;color:#1d1d1d;letter-spacing:-0.15px;left:512px;">No</div>
<svg class="a" style="left:572px;top:807px" width="9" height="10" viewBox="0 0 9 10"><rect x="0" y="0" width="9" height="10" rx="2.2" fill="#0b76f5"/><path d="M2.6,4 L4.5,2.3 L6.4,4 M2.6,6 L4.5,7.7 L6.4,6" fill="none" stroke="#fff" stroke-width="1.1" stroke-linecap="round" stroke-linejoin="round"/></svg>
<div class="a spop" style="left:1150px;top:804px;width:105px;height:13px"></div>
<div class="t" style="top:802px;height:19px;line-height:19px;font-size:13.5px;color:#1d1d1d;letter-spacing:-0.15px;left:1157px;">Normale</div>
<svg class="a" style="left:1245px;top:807px" width="9" height="10" viewBox="0 0 9 10"><rect x="0" y="0" width="9" height="10" rx="2.2" fill="#0b76f5"/><path d="M2.6,4 L4.5,2.3 L6.4,4 M2.6,6 L4.5,7.7 L6.4,6" fill="none" stroke="#fff" stroke-width="1.1" stroke-linecap="round" stroke-linejoin="round"/></svg>
<div class="a" style="left:106px;top:718px;width:1px;height:104px;background:#b5b5b5"></div>
<div class="a" style="left:226px;top:718px;width:1px;height:104px;background:#b5b5b5"></div>
<div class="a" style="left:476px;top:718px;width:1px;height:104px;background:#b5b5b5"></div>
<div class="a" style="left:496px;top:718px;width:1px;height:104px;background:#b5b5b5"></div>
<div class="a" style="left:588px;top:718px;width:1px;height:104px;background:#b5b5b5"></div>
<div class="a" style="left:615px;top:718px;width:1px;height:104px;background:#b5b5b5"></div>
<div class="a" style="left:715px;top:718px;width:1px;height:104px;background:#b5b5b5"></div>
<div class="a" style="left:815px;top:718px;width:1px;height:104px;background:#b5b5b5"></div>
<div class="a" style="left:1115px;top:718px;width:1px;height:104px;background:#b5b5b5"></div>
<div class="a" style="left:1141px;top:718px;width:1px;height:104px;background:#b5b5b5"></div>
<div class="a" style="left:1261px;top:718px;width:1px;height:104px;background:#b5b5b5"></div>
<div class="a" style="left:55px;top:834px;width:1077px;height:7px;background:#7b7b7b;border-radius:4px"></div>
<div class="t" style="top:861px;height:19px;line-height:19px;font-size:13.5px;color:#1d1d1d;letter-spacing:-0.15px;left:28px;">Saldo:</div>
<div class="a tf" style="left:72px;top:860px;width:195px;height:19px;background:#fff;border-color:#dedede;border-bottom-color:#c3c3c3"></div>
<div class="t" style="top:861px;height:20px;line-height:20px;font-size:13.5px;color:#1d1d1d;letter-spacing:-0.15px;right:1009px;text-align:right;">0,00 €</div>
<div class="t" style="top:861px;height:19px;line-height:19px;font-size:13.5px;color:#1d1d1d;letter-spacing:-0.15px;left:299px;">Tot. Dare:</div>
<div class="a tf" style="left:362px;top:860px;width:196px;height:19px;background:#fff;border-color:#dedede;border-bottom-color:#c3c3c3"></div>
<div class="t" style="top:861px;height:20px;line-height:20px;font-size:13.5px;color:#1d1d1d;letter-spacing:-0.15px;right:718px;text-align:right;">1.375,74 €</div>
<div class="t" style="top:861px;height:19px;line-height:19px;font-size:13.5px;color:#1d1d1d;letter-spacing:-0.15px;left:590px;">Tot. Avere:</div>
<div class="a tf" style="left:659px;top:860px;width:195px;height:19px;background:#fff;border-color:#dedede;border-bottom-color:#c3c3c3"></div>
<div class="t" style="top:861px;height:20px;line-height:20px;font-size:13.5px;color:#1d1d1d;letter-spacing:-0.15px;right:422px;text-align:right;">1.375,74 €</div>
<div class="t" style="top:861px;height:19px;line-height:19px;font-size:13.5px;color:#1d1d1d;letter-spacing:-0.15px;left:885px;">Sbilancio:</div>
<div class="a tf" style="left:950px;top:860px;width:219px;height:19px;background:#fff;border-color:#dedede;border-bottom-color:#c3c3c3"></div>
<div class="t" style="top:861px;height:20px;line-height:20px;font-size:13.5px;color:#1d1d1d;letter-spacing:-0.15px;right:107px;text-align:right;">0,00 €</div>
<svg class="a" style="left:1249px;top:906px" width="15" height="15" viewBox="0 0 15 15"><path d="M14.5,1.5 L1.5,14.5 M14.5,5.5 L5.5,14.5 M14.5,9.5 L9.5,14.5" stroke="#fff" stroke-width="1.3"/><path d="M14.5,0.2 L0.2,14.5 M14.5,4.2 L4.2,14.5 M14.5,8.2 L8.2,14.5" stroke="#8e8e8e" stroke-width="1.1"/></svg>
<div class="a" style="left:1227px;top:909px;width:13px;height:4px;background:#dbe3e8;border-radius:1px"></div>
<div class="a" style="left:0;top:930px;width:1273px;height:1px;background:#f8f8f8"></div>
</body></html>
